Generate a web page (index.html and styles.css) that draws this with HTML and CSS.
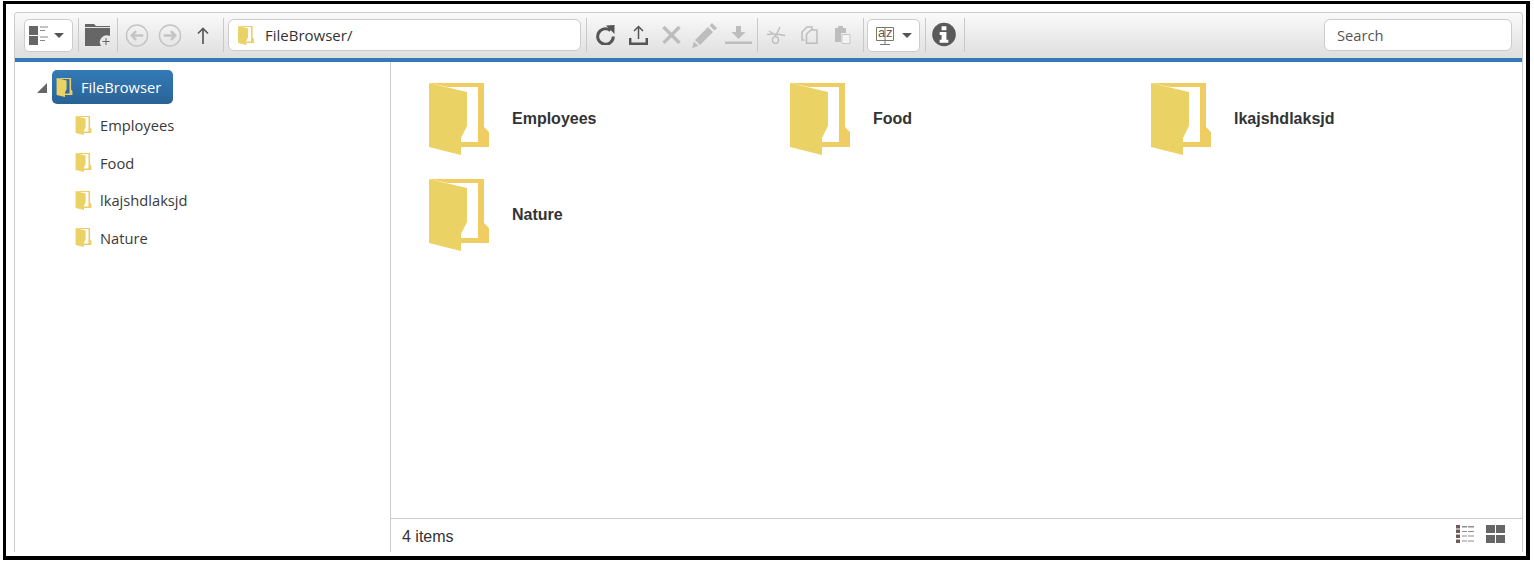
FILE: index.html
```html
<!DOCTYPE html>
<html lang="en">
<head>
<meta charset="utf-8">
<title>File Browser</title>
<link rel="stylesheet" href="styles.css">
</head>
<body>
<svg class="defs" width="0" height="0" aria-hidden="true">
  <symbol id="folder" viewBox="0 0 60 72">
    <path fill="#f0cd62" d="M0 0H55V44L60 49V64H32V59H49V4H19L0 0Z"/>
    <path fill="#ead264" d="M0 0L38 9V43L32 55V72L0 64Z"/>
  </symbol>
</svg>
<div class="frame">
  <div class="manager">
    <div class="toolbar">
      <button class="drop w49"><svg width="20" height="19" viewBox="0 0 20 19"><path fill="#666" d="M0 0H9V9H0ZM0 10H9V19H0Z"/><path stroke="#888" stroke-width="1.200" d="M11 1H19M11 4.500H16M11 11H19M11 14.500H16"/></svg><i class="caret"></i></button>
      <span class="sep s5"></span>
      <span class="tool w25 l6"><svg width="25" height="22" viewBox="0 0 25 22"><path fill="#666" d="M0 0H9L11 2H25V12A7 7 0 0 0 16 22H0Z"/><path stroke="#e4e4e4" d="M0 3.500H25"/><path stroke="#666" d="M21 14V21M17.500 17.500H24.500"/></svg></span>
      <span class="sep s7"></span>
      <span class="tool circ w24 l7"><svg width="25" height="25" viewBox="0 0 25 25" fill="none" stroke="#c4c4c4"><circle cx="12.500" cy="12.500" r="11" stroke-width="1.500"/><path stroke-width="2.500" d="M19 12.500H7M11.500 8L7 12.500L11.500 17"/></svg></span>
      <span class="tool circ w24 l9"><svg width="25" height="25" viewBox="0 0 25 25" fill="none" stroke="#c4c4c4"><circle cx="12.500" cy="12.500" r="11" stroke-width="1.500"/><path stroke-width="2.500" d="M6 12.500H18M13.500 8L18 12.500L13.500 17"/></svg></span>
      <span class="tool w16 l13"><svg width="12" height="17" viewBox="0 0 12 17" fill="none" stroke="#5a5a5a" stroke-width="1.700"><path d="M6 17V1.500M1 6.500L6 1.500L11 6.500"/></svg></span>
      <span class="sep s13"></span>
      <div class="address">
        <svg class="addr-icon"><use href="#folder"/></svg>
        <span>FileBrowser/</span>
      </div>
      <span class="sep s5"></span>
      <span class="tool w19 l9"><svg width="19" height="20" viewBox="0 0 19 20" fill="none"><path stroke="#555" stroke-width="3" d="M14.500 5.500A7.800 7.800 0 1 0 17.300 11.500"/><path fill="#555" d="M10 .5L18.500 0V9Z"/></svg></span>
      <span class="tool w19 l14"><svg width="19" height="20" viewBox="0 0 19 20" fill="none" stroke="#555"><path stroke-width="1.500" d="M9.500 14V1.500M5 6L9.500 1.500L14 6"/><path stroke-width="2.500" d="M1.200 13V18.700H17.800V13"/></svg></span>
      <span class="tool w19 l14"><svg width="19" height="18" viewBox="0 0 19 18" stroke="#bdbdbd" stroke-width="3.400"><path d="M1.500 1L17.500 17M17.500 1L1.500 17"/></svg></span>
      <span class="tool w25 l11"><svg width="25" height="25" viewBox="0 0 25 25" fill="#bdbdbd"><path d="M17.500 2.500L20 0L25 5L22.500 7.500ZM16 4L21 9L8 22L3 17ZM2 18.500L6.500 23L0 25Z"/></svg></span>
      <span class="tool w27 l8"><svg width="27" height="18" viewBox="0 0 27 18" fill="#bdbdbd"><path d="M11 0H16V6H20.500L13.500 13L6.500 6H11ZM0 15.500H27V18H0Z"/></svg></span>
      <span class="sep s5"></span>
      <span class="tool w19 l9"><svg width="19" height="18" viewBox="0 0 19 18" fill="none" stroke="#bdbdbd" stroke-width="1.400"><path d="M0 8.500Q9 7 18 9.500M13 1C11 6 9 9 7.500 11"/><ellipse cx="8.500" cy="14" rx="3" ry="3.400"/><path d="M6 7.500L2 5"/></svg></span>
      <span class="tool w17 l15"><svg width="17" height="18" viewBox="0 0 17 18" fill="none" stroke="#bdbdbd" stroke-width="1.500"><path d="M3.500 14H1V6L6 1H11V4"/><path d="M5.500 17.200V8L10 4H16V17.200Z"/></svg></span>
      <span class="tool w17 l16"><svg width="17" height="18" viewBox="0 0 17 18"><path fill="#bdbdbd" d="M1 2H4V0H9V2H12V7H7V16H1Z"/><path fill="#f4f4f4" stroke="#c8c8c8" d="M8 8.500H16V17.500H8Z"/></svg></span>
      <span class="sep s12"></span>
      <button class="drop w53 l3"><span class="sort"><svg width="18" height="18" viewBox="0 0 18 18"><path fill="#fff" stroke="#777" d="M.5.500H17.500V13.500H.5Z"/><path stroke="#777" d="M9 .5V18M4 17.500H14"/></svg><span class="sort-a">a</span><span class="sort-z">z</span></span><i class="caret"></i></button>
      <span class="sep s5"></span>
      <span class="tool info w24 l6"><svg width="25" height="25" viewBox="0 0 25 25"><circle cx="12.500" cy="12.500" r="12.300" fill="#5a5a5a"/><path fill="#fff" d="M10 4H15V8H10ZM8 10H15V18H17V21H8V18H10V13H8Z"/></svg></span>
      <span class="sep s8"></span>
      <input class="search" type="text" placeholder="Search">
    </div>
    <div class="content">
      <nav class="tree">
        <div class="root-row">
          <i class="arrow"></i>
          <span class="root"><svg class="tree-icon"><use href="#folder"/></svg>FileBrowser</span>
        </div>
        <ul class="children">
          <li><svg class="tree-icon"><use href="#folder"/></svg>Employees</li>
          <li><svg class="tree-icon"><use href="#folder"/></svg>Food</li>
          <li><svg class="tree-icon"><use href="#folder"/></svg>lkajshdlaksjd</li>
          <li><svg class="tree-icon"><use href="#folder"/></svg>Nature</li>
        </ul>
      </nav>
      <main class="main">
        <div class="grid">
          <div class="item"><svg class="big"><use href="#folder"/></svg><strong>Employees</strong></div>
          <div class="item"><svg class="big"><use href="#folder"/></svg><strong>Food</strong></div>
          <div class="item"><svg class="big"><use href="#folder"/></svg><strong>lkajshdlaksjd</strong></div>
          <div class="item"><svg class="big"><use href="#folder"/></svg><strong>Nature</strong></div>
        </div>
        <footer class="status">
          <span>4 items</span>
          <span class="views">
            <svg width="18" height="18" viewBox="0 0 18 18"><path fill="#6f5a5a" d="M0 0H4V3.500H0ZM0 4.500H4V8H0ZM0 9.500H4V13H0ZM0 14.500H4V18H0Z"/><path fill="#8e8e8e" d="M6 1H11V2.500H6ZM12 1H18V2.500H12ZM6 6H11V7H6ZM12 6H18V7H12ZM6 10.500H11V11.500H6ZM12 10.500H18V11.500H12ZM6 15.500H11V16.500H6ZM12 15.500H18V16.500H12Z"/></svg>
            <svg width="19" height="18" viewBox="0 0 19 18" fill="#666"><path d="M0 0H9V8H0ZM10 0H19V8H10ZM0 10H9V18H0ZM10 10H19V18H10Z"/></svg>
          </span>
        </footer>
      </main>
    </div>
  </div>
</div>
</body>
</html>
```
FILE: styles.css
```css
* { box-sizing: border-box; }
html, body { margin: 0; padding: 0; background: #fff; }
body { width: 1534px; height: 564px; overflow: hidden; padding: 1px 4px 0 3px; }
.defs { position: absolute; }
.frame {
  width: 1527px;
  height: 559px;
  border: solid #000;
  border-width: 3px 4px 4px 3px;
  padding: 8px 3px 4px 8px;
  background: #fff;
}
.manager {
  height: 100%;
  display: flex;
  flex-direction: column;
  border: 1px solid #ccc;
  border-bottom: 0;
  border-radius: 4px 4px 0 0;
  font-family: "Open Sans", "Noto Sans", sans-serif;
  color: #333;
}
.toolbar {
  height: 49px;
  flex: none;
  display: flex;
  align-items: center;
  padding: 0 10px 0 9px;
  border-bottom: 4px solid #337ab7;
  background: linear-gradient(#fafafa, #dedede);
  border-radius: 4px 4px 0 0;
}
.sep { flex: none; width: 1px; height: 34px; margin-bottom: 1px; background: #c9c9c9; }
.s5 { margin-left: 5px; margin-right: 0; }
.s7 { margin-left: 7px; }
.s8 { margin-left: 8px; margin-right: auto; }
.s12 { margin-left: 12px; }
.s13 { margin-left: 13px; }
.tool { flex: none; display: flex; align-items: center; justify-content: center; height: 33px; padding-bottom: 1px; }
.tool.circ { padding-bottom: 0; }
.tool.info { padding-bottom: 2px; }
.w16 { width: 15px; } .w17 { width: 17px; } .w19 { width: 19px; }
.w24 { width: 24px; } .w25 { width: 25px; } .w27 { width: 27px; }
.l3 { margin-left: 3px; } .l6 { margin-left: 6px; } .l7 { margin-left: 7px; }
.l8 { margin-left: 8px; } .l9 { margin-left: 9px; } .l11 { margin-left: 11px; }
.l13 { margin-left: 13px; } .l14 { margin-left: 14px; } .l15 { margin-left: 15px; }
.l16 { margin-left: 16px; }
.drop {
  flex: none;
  height: 33px;
  display: flex;
  align-items: center;
  gap: 5px;
  padding: 0 0 0 4px;
  background: #fff;
  border: 1px solid #ccc;
  border-radius: 5px;
}
.w49 { width: 49px; }
.w53 { width: 53px; padding-left: 8px; gap: 8px; }
.caret { width: 0; height: 0; border: 5px solid transparent; border-top: 5px solid #555; border-bottom: 0; }
.sort { position: relative; display: block; width: 18px; height: 18px; }
.sort svg { display: block; }
.sort-a, .sort-z {
  position: absolute;
  top: -1px;
  font: 400 13px/14px "Liberation Sans", sans-serif;
  color: #7a5230;
}
.sort-a { left: 2px; }
.sort-z { left: 10px; }
.address {
  flex: none;
  width: 353px;
  height: 32px;
  margin-left: 4px;
  margin-bottom: 1px;
  display: flex;
  align-items: center;
  padding-left: 9px;
  background: #fff;
  border: 1px solid #ccc;
  border-radius: 6px;
  font-size: 15px;
}
.addr-icon { width: 16px; height: 19px; margin-right: 11px; }
.search {
  flex: none;
  width: 188px;
  height: 32px;
  margin-bottom: 1px;
  padding: 0 12px;
  border: 1px solid #ccc;
  border-radius: 6px;
  background: #fff;
  font: 14.700px "Open Sans", sans-serif;
  color: #444;
}
.search::placeholder { color: #555; opacity: 1; }
.content { flex: 1; display: flex; min-height: 0; }
.tree {
  width: 376px;
  flex: none;
  border-right: 1px solid #ccc;
  padding: 8px 0 0 22px;
  font-size: 14.700px;
}
.root-row { display: flex; align-items: center; height: 34px; }
.arrow {
  width: 0;
  height: 0;
  border-style: solid;
  border-width: 0 0 10px 10px;
  border-color: transparent transparent #666 transparent;
  margin-top: 2px;
}
.root {
  margin-left: 5px;
  height: 34px;
  width: 121px;
  display: flex;
  align-items: center;
  padding-left: 4px;
  color: #fff;
  border-radius: 5px;
  background: linear-gradient(#337ab7, #2a6395);
}
.tree-icon { width: 17px; height: 19px; flex: none; margin-right: 8px; }
.children { list-style: none; margin: 2.400px 0 0; padding: 0 0 0 38px; }
.children li { height: 37.500px; display: flex; align-items: center; color: #3a3a3a; }
.main { flex: 1; min-width: 0; display: flex; flex-direction: column; }
.grid {
  flex: 1;
  display: grid;
  grid-template-columns: repeat(3, 361px);
  grid-auto-rows: 96px;
  padding: 21px 0 0 38px;
}
.item { display: flex; align-items: flex-start; }
.big { width: 60px; height: 72px; flex: none; margin-right: 23px; }
.item strong {
  font: 700 16px/18px "Liberation Sans", sans-serif;
  color: #333;
  margin-top: 27px;
}
.status {
  height: 34px;
  flex: none;
  display: flex;
  align-items: center;
  justify-content: space-between;
  padding: 2px 17px 0 11px;
  border-top: 1px solid #ccc;
  font: 16px "Liberation Sans", sans-serif;
  color: #333;
}
.views { display: flex; gap: 12px; margin-top: -5px; }
```
